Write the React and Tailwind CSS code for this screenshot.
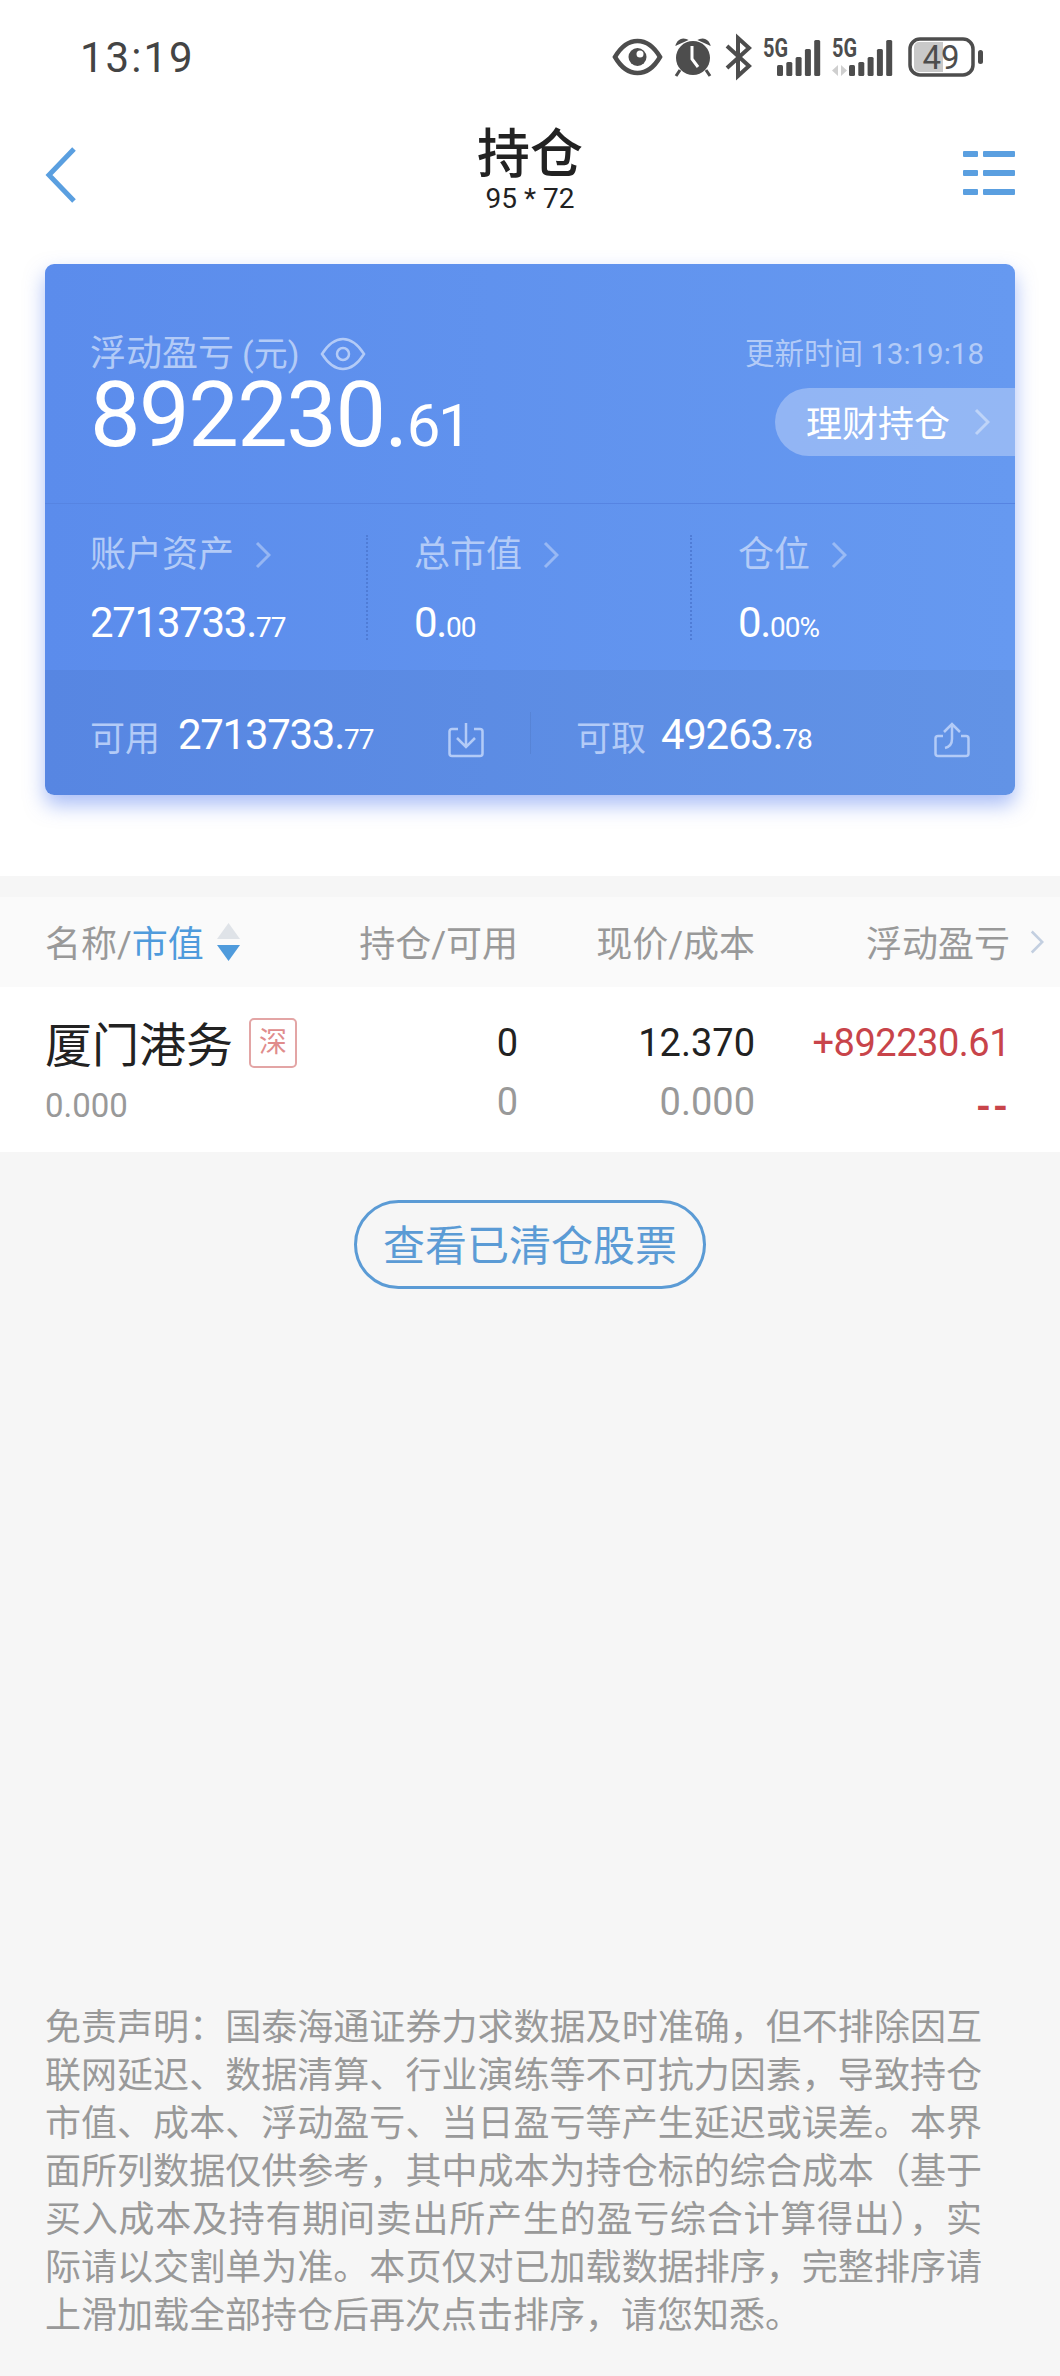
import React from 'react';

const stats = [
    { label: '账户资产', int: '2713733.', dec: '77' },
    { label: '总市值', int: '0.', dec: '00' },
    { label: '仓位', int: '0.', dec: '00%' },
];

const Chevron = ({ className }) => (
    <svg className={className} viewBox="0 0 16 28" fill="none" stroke="currentColor" strokeWidth="3">
        <path d="M2 2l12 12L2 26" />
    </svg>
);

const SignalBars = ({ x, heights }) => (
    <g fill="#4d4d4d">
        {heights.map((h, i) => (
            <rect key={i} x={x + i * 9.3} y={40 - h} width="6" height={h} rx="1.5" />
        ))}
    </g>
);

const StatusIcons = () => (
    <svg width="370" height="42" viewBox="0 0 370 42" className="block overflow-visible">
        {/* eye */}
        <path d="M1 21C8 9 16 5 23.500 5S39 9 46 21C39 33 31 37 23.500 37S8 33 1 21Z" fill="none" stroke="#4d4d4d" strokeWidth="4.500" />
        <circle cx="23.500" cy="21" r="9" fill="#4d4d4d" />
        <circle cx="26" cy="18" r="3.500" fill="#fff" />
        {/* alarm */}
        <circle cx="79" cy="22" r="17" fill="#4d4d4d" />
        <path d="M63 8a7 7 0 0 1 9-4zM95 8a7 7 0 0 0-9-4z" fill="#4d4d4d" stroke="#4d4d4d" strokeWidth="2" />
        <path d="M66 34l-4 6M92 34l4 6" stroke="#4d4d4d" strokeWidth="3" />
        <path d="M78 10v13l6 8" fill="none" stroke="#fff" strokeWidth="3" />
        {/* bluetooth */}
        <path d="M113 10l22 20-11 10V2l11 10-22 20" fill="none" stroke="#4d4d4d" strokeWidth="4" />
        {/* first sim */}
        <text x="149" y="21" fontFamily="Roboto" fontSize="25" fontWeight="700" fill="#4d4d4d" textLength="25" lengthAdjust="spacingAndGlyphs">5G</text>
        <SignalBars x={163} heights={[11, 14, 19, 27, 36]} />
        {/* second sim */}
        <text x="218" y="21" fontFamily="Roboto" fontSize="25" fontWeight="700" fill="#4d4d4d" textLength="25" lengthAdjust="spacingAndGlyphs">5G</text>
        <path d="M224 29l-6 5.500 6 5.500zM227 29v11l6-5.500z" fill="#cfcfcf" />
        <SignalBars x={235} heights={[11, 14, 19, 27, 36]} />
        {/* battery */}
        <rect x="296" y="3" width="63" height="36" rx="10" fill="none" stroke="#4d4d4d" strokeWidth="3.500" />
        <path d="M300 11a5 5 0 0 1 5-5h24v30h-24a5 5 0 0 1-5-5z" fill="#c9c9c9" />
        <text x="327" y="33" fontFamily="Roboto" fontSize="33" textAnchor="middle" fill="#4d4d4d">49</text>
        <rect x="364" y="14" width="5" height="14" rx="2.500" fill="#4d4d4d" />
    </svg>
);

export default function App() {
    return (
        <div className="h-[2376px] flex flex-col overflow-hidden bg-[#f6f6f6] font-['Roboto','Noto_Sans_CJK_SC',sans-serif]">
            <div className="h-[876px] bg-white">
                {/* status bar */}
                <div className="h-[114px] flex items-center justify-between pl-[80px] pr-[76px]">
                    <span className="pt-[2px] text-[42px] leading-[42px] tracking-[2px] text-[#444]">13:19</span>
                    <StatusIcons />
                </div>

                {/* nav */}
                <div className="h-[150px] grid grid-cols-[1fr_auto_1fr] px-[45px]">
                    <svg className="mt-[33px] w-[31px] h-[56px] text-[#5a9fe0]" viewBox="0 0 31 56" fill="none" stroke="currentColor" strokeWidth="5">
                        <path d="M29 2L4 28l25 26" />
                    </svg>
                    <div className="pt-[15px] text-center">
                        <div className="text-[53px] leading-[52px] font-medium text-[#222]">持仓</div>
                        <div className="mt-[3px] text-[28px] leading-[30px] text-[#222]">95 * 72</div>
                    </div>
                    <div className="mt-[37px] flex flex-col gap-[13px] items-end">
                        {[0, 1, 2].map(i => (
                            <div key={i} className="flex gap-[5px]">
                                <div className="w-[15px] h-[6px] rounded-[1px] bg-[#5a9fe0]" />
                                <div className="w-[32px] h-[6px] rounded-[1px] bg-[#5a9fe0]" />
                            </div>
                        ))}
                    </div>
                </div>

                {/* account card */}
                <div className="mx-[45px] h-[531px] rounded-[9px] bg-linear-to-r from-[#5b8cec] to-[#6699f0] shadow-[0_10px_20px_rgba(85,125,240,0.5)] flex flex-col overflow-hidden">
                    <div className="h-[240px] border-b border-[#5684e2] flex justify-between">
                        <div className="pl-[45px] pt-[72px]">
                            <div className="flex items-center text-[36px] leading-[36px] text-[#b3cbf7]">
                                <span>浮动盈亏</span>
                                <span className="ml-[8px] text-[34px]">(元)</span>
                                <svg className="ml-[20px] w-[46px] h-[34px]" viewBox="0 0 46 34" fill="none" stroke="currentColor" strokeWidth="2.500">
                                    <path d="M2 17C9 6 16 2 23 2s14 4 21 15c-7 11-14 15-21 15S9 28 2 17Z" />
                                    <circle cx="23" cy="17" r="6" />
                                </svg>
                            </div>
                            <div className="leading-[88px] text-white whitespace-nowrap">
                                <span className="text-[90px] tracking-[-1.500px]">892230.</span>
                                <span className="text-[60px] tracking-[-2.500px]">61</span>
                            </div>
                        </div>
                        <div className="pt-[75px] flex flex-col items-end">
                            <div className="pr-[31px] text-[29.500px] leading-[30px] text-[#b3cbf7] whitespace-nowrap">更新时间 13:19:18</div>
                            <div className="mt-[19px] w-[240px] h-[68px] rounded-l-full bg-white/30 flex items-center pl-[31px]">
                                <span className="pt-[5px] text-[36px] leading-[36px] text-white">理财持仓</span>
                                <Chevron className="ml-[24px] w-[16px] h-[28px] text-white/40" />
                            </div>
                        </div>
                    </div>

                    <div className="h-[166px] flex pl-[45px]">
                        {stats.map((s, i) => (
                            <div key={s.label} className="flex">
                                <div className={`w-[276px] pt-[33px] ${i > 0 ? 'ml-[46px]' : ''}`}>
                                    <div className="flex items-center text-[36px] leading-[36px] text-[#b3cbf7]">
                                        <span>{s.label}</span>
                                        <Chevron className="ml-[21px] w-[16px] h-[28px] text-white/35" />
                                    </div>
                                    <div className="mt-[29px] leading-[42px] text-white whitespace-nowrap">
                                        <span className="text-[42px] tracking-[-1.300px]">{s.int}</span>
                                        <span className="text-[28px] tracking-[-1px]">{s.dec}</span>
                                    </div>
                                </div>
                                {i < 2 && <div className="mt-[31px] h-[105px] border-l-2 border-dotted border-[#4f7cd6]" />}
                            </div>
                        ))}
                    </div>

                    <div className="h-[125px] bg-black/[0.04] flex items-center">
                        <div className="w-[485px] flex items-center pl-[45px] pr-[46px]">
                            <span className="mt-[14px] text-[35px] leading-[36px] text-[#b3cbf7]">可用</span>
                            <span className="ml-[18px] mt-[14px] leading-[42px] text-white whitespace-nowrap">
                                <span className="text-[42px] tracking-[-1.300px]">2713733.</span>
                                <span className="text-[28px] tracking-[-1px]">77</span>
                            </span>
                            <svg className="ml-auto mt-[14px] w-[36px] h-[36px] text-[#b3cbf7]" viewBox="0 0 36 36" fill="none" stroke="currentColor" strokeWidth="2.500">
                                <path d="M10 7H4a2.500 2.500 0 0 0-2.500 2.500v22A2.500 2.500 0 0 0 4 34h28a2.500 2.500 0 0 0 2.500-2.500v-22A2.500 2.500 0 0 0 32 7h-6" />
                                <path d="M18 1v24M9 16l9 9 9-9" />
                            </svg>
                        </div>
                        <div className="flex-1 flex items-center pr-[45px]">
                            <div className="h-[42px] w-px bg-black/[0.06]" />
                            <span className="ml-[45px] mt-[14px] text-[35px] leading-[36px] text-[#b3cbf7]">可取</span>
                            <span className="ml-[15px] mt-[14px] leading-[42px] text-white whitespace-nowrap">
                                <span className="text-[42px] tracking-[-1.300px]">49263.</span>
                                <span className="text-[28px] tracking-[-1px]">78</span>
                            </span>
                            <svg className="ml-auto mt-[14px] w-[36px] h-[36px] text-[#b3cbf7]" viewBox="0 0 36 36" fill="none" stroke="currentColor" strokeWidth="2.500">
                                <path d="M9 14H4a2.500 2.500 0 0 0-2.500 2.500v15A2.500 2.500 0 0 0 4 34h28a2.500 2.500 0 0 0 2.500-2.500v-15A2.500 2.500 0 0 0 32 14h-5" />
                                <path d="M18 2v15c0 5-3 8-7 9M10 10l8-8 8 8" />
                            </svg>
                        </div>
                    </div>
                </div>
            </div>

            {/* holdings table */}
            <div className="mt-[21px] h-[90px] bg-[#fafafa] grid grid-cols-[300px_218px_237px_255px_50px] items-center text-[#999] text-[36px] leading-[36px]">
                <div className="pl-[45px] flex items-center">
                    <span className="pt-[5px]">名称/</span>
                    <span className="pt-[5px] text-[#4f9bdc]">市值</span>
                    <svg className="ml-[12px] w-[25px] h-[38px]" viewBox="0 0 25 38">
                        <path d="M12.500 0L24 16H1z" fill="#dfe3e8" />
                        <path d="M1 22h23L12.500 38z" fill="#4f9bdc" />
                    </svg>
                </div>
                <div className="pt-[5px] text-right">持仓/可用</div>
                <div className="pt-[5px] text-right">现价/成本</div>
                <div className="pt-[5px] text-right">浮动盈亏</div>
                <Chevron className="ml-[20px] w-[14px] h-[26px] text-[#c3cfe0]" />
            </div>
            <div className="h-[165px] bg-white grid grid-cols-[300px_218px_237px_255px_50px] text-[38px] leading-[40px]">
                <div className="pl-[45px] pt-[31px]">
                    <div className="flex items-center">
                        <span className="translate-y-[3px] text-[47px] leading-[46px] text-[#222]">厦门港务</span>
                        <span className="ml-[16px] w-[48px] h-[50px] rounded-[5px] border-2 border-[#e3a5a5] flex items-center justify-center text-[28px] text-[#e08c8c]">深</span>
                    </div>
                    <div className="mt-[20px] text-[33px] leading-[36px] text-[#999]">0.000</div>
                </div>
                <div className="pt-[36px] text-right text-[#222]">
                    <div>0</div>
                    <div className="mt-[19px] text-[#999]">0</div>
                </div>
                <div className="pt-[36px] text-right text-[#222]">
                    <div>12.370</div>
                    <div className="mt-[19px] text-[#999]">0.000</div>
                </div>
                <div className="pt-[36px] text-right text-[#c8444a]">
                    <div className="tracking-[-0.500px]">+892230.61</div>
                    <div className="mt-[24px] font-bold tracking-[2px]">--</div>
                </div>
            </div>

            <div className="mt-[48px] mx-auto w-[352px] h-[89px] rounded-full border-[3px] border-[#5b9bd5] flex items-center justify-center pt-[5px] text-[42px] leading-[42px] text-[#5b9bd5]">
                查看已清仓股票
            </div>

            <div className="mt-auto pl-[45px] pr-[78px] pb-[36px] text-justify text-[36px] leading-[48px] text-[#999]">
                免责声明：国泰海通证券力求数据及时准确，但不排除因互联网延迟、数据清算、行业演练等不可抗力因素，导致持仓市值、成本、浮动盈亏、当日盈亏等产生延迟或误差。本界面所列数据仅供参考，其中成本为持仓标的综合成本（基于买入成本及持有期间卖出所产生的盈亏综合计算得出），实际请以交割单为准。本页仅对已加载数据排序，完整排序请上滑加载全部持仓后再次点击排序，请您知悉。
            </div>
        </div>
    );
}
